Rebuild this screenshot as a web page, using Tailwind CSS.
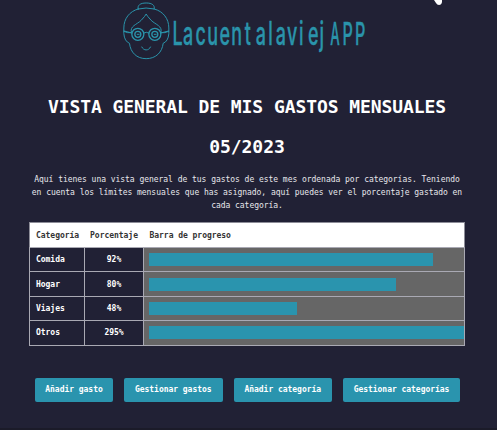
<!DOCTYPE html>
<html lang="es">
<head>
<meta charset="utf-8">
<title>LacuentalaviejAPP</title>
<script src="https://cdn.jsdelivr.net/npm/@tailwindcss/browser@4"></script>
</head>
<body class="bg-[#212135] text-white overflow-hidden font-['DejaVu_Sans_Mono',monospace]">
<div class="relative flex flex-col w-[497px] h-[430px] overflow-hidden border-b-2 border-[#1b1b29]">
  <header class="h-[65px] shrink-0 pl-[110px]">
    <svg width="270" height="65" viewBox="0 0 270 65" fill="none" stroke="#2a94ab" role="img" aria-label="LacuentalaviejAPP">
      <g transform="translate(.5 0) scale(.33333)" stroke-width="3" stroke-linecap="round" stroke-linejoin="round">
        <path d="M83 27C80 16 89 9 107 9S134 16 131 27"/>
        <path d="M83 27Q107 21 131 27C158 34 175 56 175 84V101Q173 124 158 130C155 157 136 176 107 176S60 157 57 130Q42 124 40 101V84C40 56 57 34 83 27Z"/>
        <path d="M40 94Q51 100 63 98C57 78 79 74 92 61Q105 47 107 42Q109 47 122 61C135 74 157 78 151 98Q163 100 175 94"/>
        <circle cx="82" cy="103" r="18" stroke-width="4"/>
        <circle cx="133" cy="103" r="18" stroke-width="4"/>
        <path d="M100 99Q107 94 115 99M64 99L41 93M151 99L174 93"/>
        <circle cx="82" cy="103" r="9" stroke-width="4"/><path d="M80 103H86"/>
        <circle cx="133" cy="103" r="9" stroke-width="4"/><path d="M131 103H137"/>
        <path d="M94 141C99 153 115 153 120 141"/>
      </g>
      <g fill="#2a94ab" stroke="#2a94ab" stroke-width=".4" font-family="Inter, sans-serif" font-weight="500">
        <text transform="scale(.56 1)" y="45" font-size="32" x="111.5 130.5 152.5 173.5 195.5 216.5 240.5 260.5 282.5 296 316 337.5 353.5 374">Lacuentalaviej</text>
        <text transform="translate(220.2 45) scale(.43 1)" font-size="31">A</text>
        <text transform="scale(.52 1)" y="45" font-size="31" x="447 471">PP</text>
      </g>
    </svg>
  </header>
  <h1 class="mt-[22px] mr-[3px] text-center text-[18px] leading-[40px] tracking-[-0.08px] font-bold">VISTA GENERAL DE MIS GASTOS MENSUALES<br>05/2023</h1>
  <p class="mt-[6px] text-center text-[8px] leading-[13px] tracking-[-0.035px] text-[#e8e8ec] whitespace-nowrap pr-[3px]">Aquí tienes una vista general de tus gastos de este mes ordenada por categorías. Teniendo<br>en cuenta los límites mensuales que has asignado, aquí puedes ver el porcentaje gastado en<br>cada categoría.</p>
  <table class="mt-[10px] ml-[29px] w-[436px] shrink-0 table-fixed border-collapse text-[8px] leading-[12px] tracking-[-0.03px] font-bold border border-[#8d8d98]">
    <colgroup><col class="w-[55px]"><col class="w-[59px]"><col></colgroup>
    <thead>
      <tr class="h-[25px] bg-white text-[#333]"><th class="text-left pl-[6px] pt-[2px]">Categoría</th><th class="whitespace-nowrap pt-[2px]">Porcentaje</th><th class="text-left pl-[6px] pt-[2px]">Barra de progreso</th></tr>
    </thead>
    <tbody>
      <tr class="h-[24.4px]"><td class="border border-[#a9a9b3] pl-[6px] pt-px">Comida</td><td class="border border-[#a9a9b3] text-center pt-px">92%</td><td class="border border-[#a9a9b3] bg-[#666] pl-[5px]"><div class="h-[13px] w-[284px] bg-[#2a94ae]"></div></td></tr>
      <tr class="h-[24.4px]"><td class="border border-[#a9a9b3] pl-[6px] pt-px">Hogar</td><td class="border border-[#a9a9b3] text-center pt-px">80%</td><td class="border border-[#a9a9b3] bg-[#666] pl-[5px]"><div class="h-[13px] w-[247px] bg-[#2a94ae]"></div></td></tr>
      <tr class="h-[24.4px]"><td class="border border-[#a9a9b3] pl-[6px] pt-px">Viajes</td><td class="border border-[#a9a9b3] text-center pt-px">48%</td><td class="border border-[#a9a9b3] bg-[#666] pl-[5px]"><div class="h-[13px] w-[148px] bg-[#2a94ae]"></div></td></tr>
      <tr class="h-[24.4px]"><td class="border border-[#a9a9b3] pl-[6px] pt-px">Otros</td><td class="border border-[#a9a9b3] text-center pt-px">295%</td><td class="border border-[#a9a9b3] bg-[#666] pl-[5px]"><div class="h-[13px] w-[315px] bg-[#2a94ae]"></div></td></tr>
    </tbody>
  </table>
  <nav class="mt-[32px] ml-[35px] flex gap-[11px] text-[8px] tracking-[-0.03px] font-bold whitespace-nowrap">
    <button class="h-[24px] w-[78px] rounded-[2px] bg-[#2a94ae] pt-px">Añadir gasto</button>
    <button class="h-[24px] w-[98.5px] rounded-[2px] bg-[#2a94ae] pt-px">Gestionar gastos</button>
    <button class="h-[24px] w-[98.5px] rounded-[2px] bg-[#2a94ae] pt-px">Añadir categoría</button>
    <button class="h-[24px] w-[117px] rounded-[2px] bg-[#2a94ae] pt-px">Gestionar categorías</button>
  </nav>
  <svg class="absolute left-[433px] top-0" width="11" height="6" viewBox="0 0 11 6"><path d="M1 0H9V2Q8.500 5 6 5Q4 5 3 3Z" fill="#fff"/></svg>
</div>
</body>
</html>
